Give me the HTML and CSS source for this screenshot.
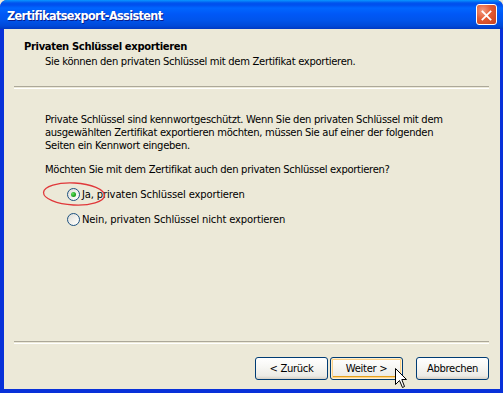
FILE: index.html
```html
<!DOCTYPE html>
<html lang="de">
<head>
<meta charset="utf-8">
<title>Zertifikatsexport-Assistent</title>
<link rel="stylesheet" href="styles.css">
</head>
<body>
<div class="window">
  <div class="titlebar">
    <span class="title">Zertifikatsexport-Assistent</span>
    <span class="close" aria-label="Schließen">
      <svg width="21" height="21" viewBox="0 0 21 21">
        <path d="M6 6 L15 15 M15 6 L6 15" stroke="#fff" stroke-width="2" stroke-linecap="square"/>
      </svg>
    </span>
  </div>
  <div class="client">
    <div class="header">
      <div class="h-title">Privaten Schlüssel exportieren</div>
      <div class="h-sub">Sie können den privaten Schlüssel mit dem Zertifikat exportieren.</div>
    </div>
    <div class="sep"></div>
    <div class="content">
      <p class="para">Private Schlüssel sind kennwortgeschützt. Wenn Sie den privaten Schlüssel mit dem<br>ausgewählten Zertifikat exportieren möchten, müssen Sie auf einer der folgenden<br>Seiten ein Kennwort eingeben.</p>
      <p class="question">Möchten Sie mit dem Zertifikat auch den privaten Schlüssel exportieren?</p>
      <div class="radios">
        <label class="radio"><span class="circle checked"><span class="dot"></span></span><span class="lbl">Ja, privaten Schlüssel exportieren</span></label>
        <label class="radio"><span class="circle"></span><span class="lbl">Nein, privaten Schlüssel nicht exportieren</span></label>
      </div>
    </div>
    <div class="sep"></div>
    <div class="buttons">
      <span class="btn">&lt; Zurück</span>
      <span class="btn hover">Weiter &gt;</span>
      <span class="btn last">Abbrechen</span>
    </div>
  </div>
  <svg class="annot" width="70" height="30" viewBox="0 0 70 30">
    <ellipse cx="34" cy="13" rx="30.5" ry="11" fill="none" stroke="#e0383a" stroke-width="1.3" transform="rotate(3 34 13)"/>
  </svg>
  <svg class="cursor" width="13" height="21" viewBox="0 0 13 21">
    <path d="M0.5 0.5 L0.5 16.5 L4.5 12.5 L7.5 19.5 L9.5 18.5 L6.8 11.5 L11.5 11.5 Z" fill="#fff" stroke="#000" stroke-width="1" stroke-linejoin="miter"/>
  </svg>
</div>
</body>
</html>
```

FILE: styles.css
```css
html, body {
  margin: 0;
  padding: 0;
  background: #ece9d8;
}

.window {
  position: relative;
  width: 503px;
  height: 393px;
  box-sizing: border-box;
  display: flex;
  flex-direction: column;
  background: #0831d9;
  border-radius: 7px 7px 0 0;
  overflow: hidden;
  font-family: "DejaVu Sans", Tahoma, sans-serif;
  font-size: 10px;
  letter-spacing: -0.3px;
  color: #000;
}

.titlebar {
  height: 29px;
  flex: none;
  display: flex;
  align-items: center;
  justify-content: space-between;
  padding: 0 6px 0 7px;
  background: linear-gradient(to bottom,
    #0997ff 0px, #0053ee 3px, #0050ee 5px, #0066ff 8px,
    #0058f7 14px, #0055ec 20px, #0049d8 26px, #0039c2 29px);
}

.title {
  font-family: "DejaVu Sans Condensed", "DejaVu Sans", sans-serif;
  font-weight: bold;
  font-size: 12.5px;
  color: #fff;
  text-shadow: 1px 1px 0 #0a1e8c;
  letter-spacing: -0.6px;
  padding-top: 1px;
}

.close {
  width: 21px;
  height: 21px;
  box-sizing: border-box;
  border: 1px solid #fff;
  border-radius: 3px;
  background: radial-gradient(circle at 30% 30%, #f39b80 0%, #e35a33 45%, #c4401d 100%);
  display: flex;
}

.client {
  flex: 1;
  margin: 0 3px 4px 4px;
  background: #ece9d8;
  display: flex;
  flex-direction: column;
  padding: 0 11px 0 10px;
}

.header {
  height: 57px;
  padding-left: 10px;
  box-sizing: border-box;
  padding-top: 11px;
}

.h-title {
  font-weight: bold;
  line-height: 13px;
  height: 13px;
  letter-spacing: -0.35px;
}

.h-sub {
  margin-top: 2px;
  padding-left: 21px;
  line-height: 13px;
}

.sep {
  height: 1px;
  border-top: 1px solid #aca899;
  border-bottom: 1px solid #fff;
  flex: none;
}

.content {
  flex: 1;
  padding: 24px 0 0 31px;
}

.para {
  margin: 0;
  line-height: 13px;
  white-space: nowrap;
}

.question {
  margin: 11px 0 0;
  line-height: 13px;
}

.radios {
  margin-top: 12px;
  display: flex;
  flex-direction: column;
  gap: 12px;
}

.radio {
  display: flex;
  align-items: center;
  height: 13px;
  margin-left: 22px;
}

.circle {
  width: 13px;
  height: 13px;
  box-sizing: border-box;
  border-radius: 50%;
  border: 1px solid #1c5180;
  background: linear-gradient(135deg, #dcdbd5 0%, #f4f4f0 60%, #fff 100%);
  display: flex;
  align-items: center;
  justify-content: center;
  flex: none;
}

.dot {
  width: 5px;
  height: 5px;
  border-radius: 50%;
  background: radial-gradient(circle at 35% 35%, #5fe35f 0%, #21a121 60%, #188018 100%);
}

.lbl {
  margin-left: 2px;
  line-height: 13px;
  letter-spacing: -0.15px;
}

.buttons {
  height: 45px;
  flex: none;
  display: flex;
  align-items: flex-start;
  justify-content: flex-end;
  padding-top: 13px;
  box-sizing: border-box;
  gap: 2px;
}

.btn {
  width: 73px;
  height: 23px;
  box-sizing: border-box;
  border: 1px solid #003c74;
  border-radius: 3px;
  background: linear-gradient(to bottom, #ffffff 0%, #f7f7f4 40%, #ecebe6 85%, #d6d0c5 100%);
  display: flex;
  align-items: center;
  justify-content: center;
  line-height: 13px;
}

.btn.hover {
  box-shadow: inset 0 0 0 1px #fff0cf, inset 0 0 0 2px #fbd28a, inset 0 -2px 0 1px #e5a01a;
}

.btn.last {
  margin-left: 11px;
}

.annot {
  position: absolute;
  left: 40px;
  top: 181px;
}

.cursor {
  position: absolute;
  left: 395px;
  top: 368px;
}
```
